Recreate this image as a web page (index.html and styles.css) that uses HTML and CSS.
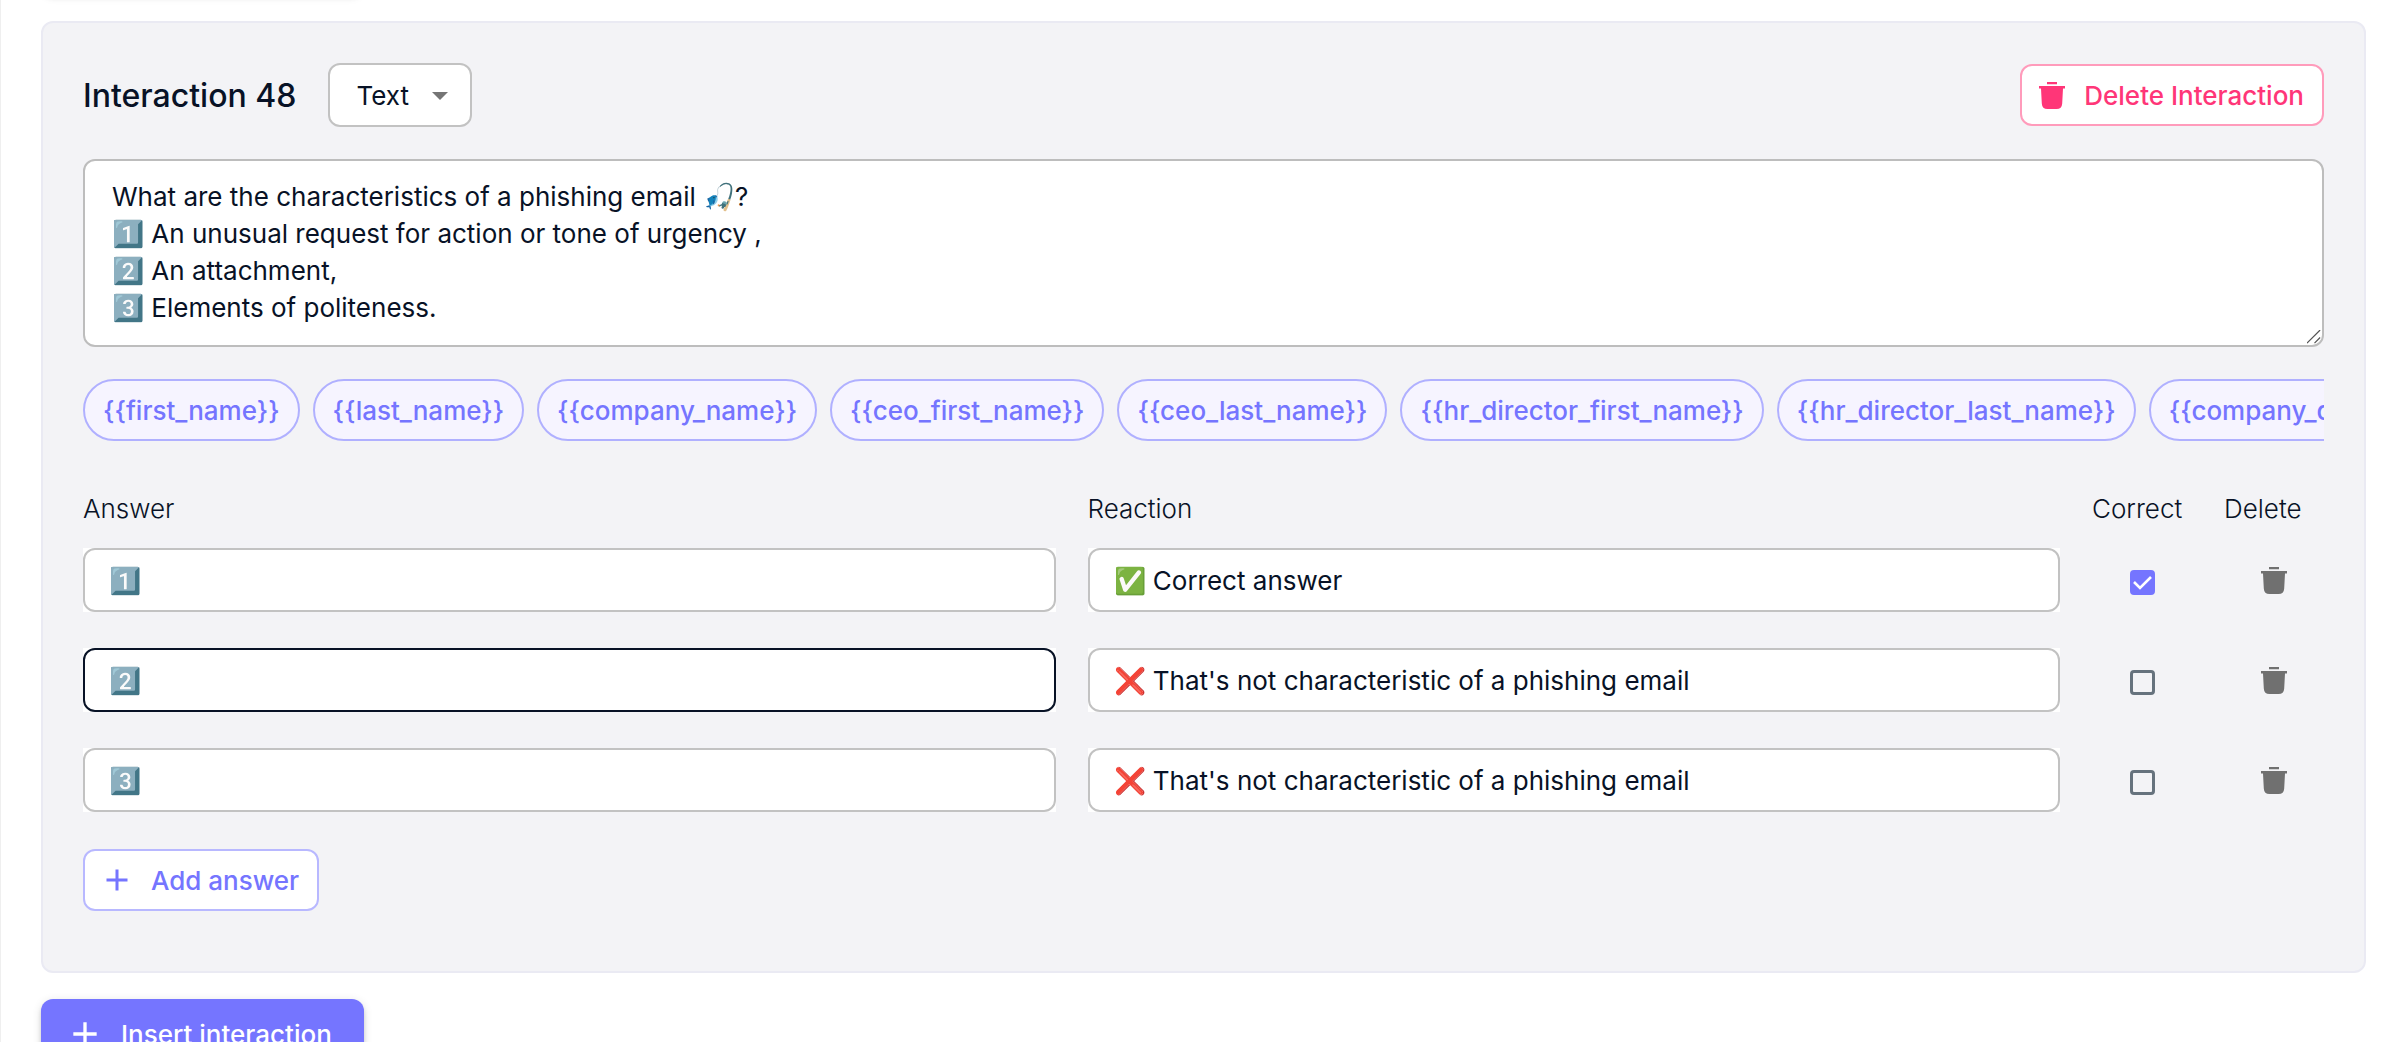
FILE: index.html
```html
<!DOCTYPE html>
<html lang="en">

<head>
  <meta charset="utf-8">
  <title>Interaction 48</title>
  <link rel="stylesheet" href="styles.css">
</head>

<body>

  <!-- shared icons -->
  <svg class="sprite" aria-hidden="true">
    <symbol id="trash" viewBox="0 0 26 27">
      <path d="M8 0h10v2.200H8zM0 4h26v2.400h-2L23.200 21.500Q22.900 27 17.500 27h-9Q3.100 27 2.800 21.500L2 6.400H0z" />
    </symbol>
    <symbol id="plus" viewBox="0 0 24 24">
      <path d="M19 13h-6v6h-2v-6H5v-2h6V5h2v6h6z" />
    </symbol>
  </svg>

  <main class="page">
    <div class="previous"></div>

    <section class="card">
      <header class="card-header">
        <h2>Interaction 48</h2>
        <div class="select">
          <select aria-label="Interaction type">
            <option>Text</option>
          </select>
          <svg class="arrow" viewBox="0 0 16 8" aria-hidden="true">
            <path d="M0 0h16L8 8z" />
          </svg>
        </div>
        <button type="button" class="btn btn-delete">
          <svg class="icon-trash" aria-hidden="true"><use href="#trash" /></svg>
          Delete Interaction
        </button>
      </header>

      <textarea class="message" rows="4" aria-label="Message">What are the characteristics of a phishing email 🎣?
1️⃣ An unusual request for action or tone of urgency ,
2️⃣ An attachment,
3️⃣ Elements of politeness.</textarea>

      <div class="chips">
        <button type="button" class="chip">{{first_name}}</button>
        <button type="button" class="chip">{{last_name}}</button>
        <button type="button" class="chip">{{company_name}}</button>
        <button type="button" class="chip">{{ceo_first_name}}</button>
        <button type="button" class="chip">{{ceo_last_name}}</button>
        <button type="button" class="chip">{{hr_director_first_name}}</button>
        <button type="button" class="chip">{{hr_director_last_name}}</button>
        <button type="button" class="chip">{{company_domain}}</button>
      </div>

      <div class="row labels">
        <span id="label-answer">Answer</span>
        <span id="label-reaction">Reaction</span>
        <span id="label-correct">Correct</span>
        <span>Delete</span>
      </div>

      <div class="answers">
        <div class="row">
          <div class="field"><input type="text" aria-labelledby="label-answer" value="1️⃣"></div>
          <div class="field"><input type="text" aria-labelledby="label-reaction" value="✅ Correct answer"></div>
          <input type="checkbox" class="check" aria-labelledby="label-correct" checked>
          <button type="button" class="remove" aria-label="Delete answer">
            <svg class="icon-trash" aria-hidden="true"><use href="#trash" /></svg>
          </button>
        </div>

        <div class="row">
          <div class="field active"><input type="text" aria-labelledby="label-answer" value="2️⃣"></div>
          <div class="field"><input type="text" aria-labelledby="label-reaction" value="❌ That's not characteristic of a phishing email"></div>
          <input type="checkbox" class="check" aria-labelledby="label-correct">
          <button type="button" class="remove" aria-label="Delete answer">
            <svg class="icon-trash" aria-hidden="true"><use href="#trash" /></svg>
          </button>
        </div>

        <div class="row">
          <div class="field"><input type="text" aria-labelledby="label-answer" value="3️⃣"></div>
          <div class="field"><input type="text" aria-labelledby="label-reaction" value="❌ That's not characteristic of a phishing email"></div>
          <input type="checkbox" class="check" aria-labelledby="label-correct">
          <button type="button" class="remove" aria-label="Delete answer">
            <svg class="icon-trash" aria-hidden="true"><use href="#trash" /></svg>
          </button>
        </div>
      </div>

      <button type="button" class="btn btn-add">
        <svg class="icon-plus" aria-hidden="true"><use href="#plus" /></svg>
        Add answer
      </button>
    </section>

    <button type="button" class="btn-insert">
      <svg class="icon-plus" aria-hidden="true"><use href="#plus" /></svg>
      Insert interaction
    </button>
  </main>

</body>

</html>
```

FILE: styles.css
```css
* {
  box-sizing: border-box;
}

body {
  margin: 0;
  height: 100vh;
  overflow: hidden;
  background-color: #ffffff;
  color: #081226;
  font-family: Inter, sans-serif;
  font-size: 26px;
}

button,
input,
select,
textarea {
  margin: 0;
  font: inherit;
  color: inherit;
}

button {
  cursor: pointer;
}

h2 {
  margin: 0 32px 0 0;
  font-size: 32px;
  font-weight: 500;
}

.sprite {
  display: none;
}

.page {
  display: flex;
  flex-direction: column;
  align-items: flex-start;
  gap: 26px;
  min-height: 100vh;
  padding: 0 40px;
  border-left: 1px solid #efefef;
}

/* bottom edge of the button that is scrolled out of view */
.previous {
  width: 322px;
  height: 40px;
  margin-top: -45px;
  border-radius: 12px;
  box-shadow: 0 4px 4px rgba(0, 0, 0, 0.05), 0 2px 10px rgba(0, 0, 0, 0.08);
}

.card {
  width: 100%;
  padding: 40px 40px 60px;
  background-color: #f3f3f6;
  border: 2px solid #eaeaf3;
  border-radius: 12px;
}

.card-header {
  display: flex;
  align-items: center;
  margin-bottom: 32px;
}

.select {
  position: relative;
}

.select select {
  display: block;
  width: 144px;
  height: 64px;
  padding: 0 26px;
  appearance: none;
  background-color: #ffffff;
  border: 2px solid #c2c2c2;
  border-radius: 12px;
}

.arrow {
  position: absolute;
  top: 29px;
  right: 24px;
  width: 16px;
  height: 8px;
  fill: #757575;
  pointer-events: none;
}

.btn {
  display: flex;
  align-items: center;
  height: 62px;
  background-color: #ffffff;
  border: 2px solid;
  border-radius: 12px;
  font-weight: 500;
}

.btn-delete {
  gap: 19px;
  margin-left: auto;
  padding: 0 18px 0 17px;
  border-color: #ff9bbb;
  color: #ff3678;
}

.btn-add {
  gap: 16px;
  padding: 0 18px 0 14px;
  border-color: #b8b8ff;
  color: #7575ff;
}

.icon-trash {
  width: 26px;
  height: 27px;
  fill: currentColor;
}

.icon-plus {
  width: 36px;
  height: 36px;
  fill: currentColor;
}

.message {
  display: block;
  width: 100%;
  height: 188px;
  margin-bottom: 32px;
  padding: 17px 27px;
  background-color: #ffffff;
  border: 2px solid #bdbdbd;
  border-radius: 12px;
  line-height: 37px;
  resize: vertical;
}

.message::-webkit-resizer {
  background: url("data:image/svg+xml,%3Csvg xmlns='http://www.w3.org/2000/svg' viewBox='0 0 16 16'%3E%3Cpath d='M0 14L14 0M8 14L14 8' fill='none' stroke='%23555' stroke-width='1.300'/%3E%3C/svg%3E") center / contain no-repeat;
}

.chips {
  display: flex;
  gap: 13px;
  margin-bottom: 49px;
  overflow: hidden;
}

.chip {
  flex-shrink: 0;
  height: 62px;
  padding: 0 18px;
  background-color: #f6f4ff;
  border: 2px solid #b0b0ff;
  border-radius: 31px;
  color: #7575ff;
  font-weight: 500;
}

.row {
  display: grid;
  grid-template-columns: 1fr 1fr 100px 100px;
  column-gap: 32px;
  align-items: center;
}

.labels {
  margin-bottom: 20px;
  font-weight: 300;
  line-height: 38px;
}

.answers {
  display: grid;
  row-gap: 36px;
  margin-bottom: 37px;
}

.field {
  background-color: #ffffff;
}

.field input {
  display: block;
  width: 100%;
  height: 64px;
  padding: 0 24px;
  background-color: #ffffff;
  border: 2px solid #c2c2c2;
  border-radius: 12px;
}

.field.active input {
  border-color: #081226;
}

.check {
  justify-self: center;
  width: 25px;
  height: 25px;
  margin-top: 4px;
  appearance: none;
  border: 3px solid #66727d;
  border-radius: 4px;
}

.check:checked {
  border-color: #7575ff;
  background: #7575ff url("data:image/svg+xml,%3Csvg xmlns='http://www.w3.org/2000/svg' viewBox='0 0 19 19'%3E%3Cpath d='M1 9l6 6L18 4' fill='none' stroke='white' stroke-width='2.600'/%3E%3C/svg%3E") center / 19px no-repeat;
}

.remove {
  display: flex;
  justify-self: center;
  padding: 0;
  background: none;
  border: 0;
  color: #707070;
}

.btn-insert {
  display: flex;
  align-items: center;
  gap: 16px;
  height: 70px;
  padding: 0 32px 0 24px;
  background-color: #7575ff;
  border: 0;
  border-radius: 12px;
  box-shadow: 0 4px 4px rgba(0, 0, 0, 0.14), 0 2px 10px rgba(0, 0, 0, 0.12);
  color: #ffffff;
  font-weight: 500;
}

.btn-insert .icon-plus {
  width: 40px;
  height: 40px;
}
```
